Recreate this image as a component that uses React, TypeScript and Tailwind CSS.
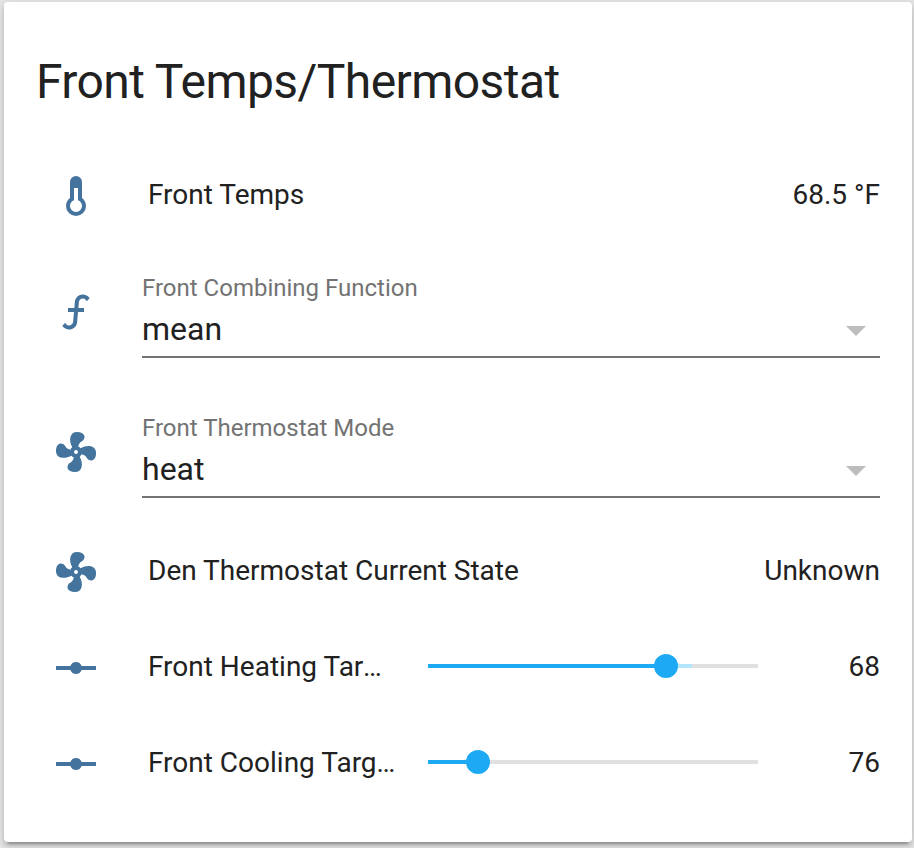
import type { ReactNode } from "react";

const ICONS = {
  thermometer:
    "M17,17A5,5 0 0,1 12,22A5,5 0 0,1 7,17C7,15.36 7.79,13.91 9,13V5A3,3 0 0,1 12,2A3,3 0 0,1 15,5V13C16.21,13.91 17,15.36 17,17M11,8V14.17C9.83,14.58 9,15.69 9,17A3,3 0 0,0 12,20A3,3 0 0,0 15,17C15,15.69 14.17,14.58 13,14.17V8H11Z",
  func: "M15.6,5.29C14.5,5.19 13.53,6 13.43,7.11L13.18,10H16V12H13L12.56,17.07C12.37,19.27 10.43,20.9 8.23,20.7C6.92,20.59 5.82,19.86 5.17,18.83L6.67,17.33C6.91,18.07 7.57,18.64 8.4,18.71C9.5,18.81 10.47,18 10.57,16.89L11,12H8V10H11.17L11.44,6.93C11.63,4.73 13.57,3.1 15.77,3.3C17.08,3.41 18.18,4.14 18.83,5.17L17.33,6.67C17.09,5.93 16.43,5.36 15.6,5.29Z",
  fan: "M12,11A1,1 0 0,0 11,12A1,1 0 0,0 12,13A1,1 0 0,0 13,12A1,1 0 0,0 12,11M12.5,2C17,2 17.11,5.57 14.75,6.75C13.76,7.24 13.32,8.29 13.13,9.22C13.61,9.42 14.03,9.73 14.35,10.13C18.05,8.13 22.03,8.92 22.03,12.5C22.03,17 18.46,17.1 17.28,14.73C16.78,13.74 15.72,13.3 14.79,13.11C14.59,13.59 14.28,14 13.88,14.34C15.87,18.03 15.08,22 11.5,22C7,22 6.91,18.42 9.27,17.24C10.25,16.75 10.69,15.71 10.89,14.79C10.4,14.59 9.97,14.27 9.65,13.87C5.96,15.85 2,15.07 2,11.5C2,7 5.56,6.89 6.74,9.26C7.24,10.25 8.29,10.68 9.22,10.87C9.41,10.39 9.73,9.97 10.14,9.65C8.15,5.96 8.94,2 12.5,2Z",
  vertex:
    "M2,11H9.17C9.58,9.83 10.69,9 12,9C13.31,9 14.42,9.83 14.83,11H22V13H14.83C14.42,14.17 13.31,15 12,15C10.69,15 9.58,14.17 9.17,13H2V11Z",
};

type IconName = keyof typeof ICONS;

function EntityIcon({ name }: { name: IconName }) {
  return (
    <div className="flex w-20 shrink-0 justify-center">
      <svg viewBox="0 0 24 24" className="size-12 fill-[#44739e]">
        <path d={ICONS[name]} />
      </svg>
    </div>
  );
}

function Row({ icon, children }: { icon: IconName; children: ReactNode }) {
  return (
    <div className="flex h-20 items-center">
      <EntityIcon name={icon} />
      <div className="ml-8 flex min-w-0 flex-1 items-center pb-[3px] text-[28px] leading-10">{children}</div>
    </div>
  );
}

function StateRow({ icon, name, state }: { icon: IconName; name: string; state: string }) {
  return (
    <Row icon={icon}>
      <span className="flex-1">{name}</span>
      <span>{state}</span>
    </Row>
  );
}

function SelectRow({ icon, label, value }: { icon: IconName; label: string; value: string }) {
  return (
    <div className="flex h-[120px] items-center">
      <EntityIcon name={icon} />
      <div className="ml-[26px] flex h-full flex-1 flex-col pt-[18px]">
        <div className="h-9 text-2xl leading-9 text-[#737373]">{label}</div>
        <div className="flex h-[52px] items-start justify-between border-b-2 border-[#737373] pr-[14px]">
          <span className="text-[32px] leading-[46px]">{value}</span>
          <svg viewBox="0 0 20 10" className="mt-5 h-[10px] w-5 fill-[#bdbdbd]">
            <path d="M0 0h20L10 10z" />
          </svg>
        </div>
      </div>
    </div>
  );
}

interface SliderRowProps {
  name: string;
  value: number;
  filled: number;
  secondary: number;
}

function SliderRow({ name, value, filled, secondary }: SliderRowProps) {
  return (
    <Row icon="vertex">
      <span className="w-[248px] truncate">{name}</span>
      <div className="relative ml-8 mt-[-1px] h-1 w-[330px] bg-[#e0e0e0]">
        <div className="absolute inset-y-0 left-0 bg-[#b3e5fc]" style={{ width: secondary }} />
        <div className="absolute inset-y-0 left-0 bg-[#1da9f3]" style={{ width: filled }} />
        <div className="absolute -top-2.5 -ml-3 size-6 rounded-full bg-[#1da9f3]" style={{ left: filled }} />
      </div>
      <span className="flex-1 text-right">{value}</span>
    </Row>
  );
}

export default function App() {
  return (
    <div className="h-[848px] overflow-hidden bg-[#e5e5e5] pt-0.5 pr-0.5 pl-1 font-[Roboto,sans-serif] text-[#212121]">
      <div className="h-[840px] rounded-[4px] bg-white px-8 shadow-[0_4px_4px_0_rgba(0,0,0,0.14),0_2px_10px_0_rgba(0,0,0,0.12),0_6px_2px_-4px_rgba(0,0,0,0.2)]">
        <h1 className="h-[154px] pt-12 text-5xl leading-[64px] tracking-[-0.012em]">Front Temps/Thermostat</h1>
        <StateRow icon="thermometer" name="Front Temps" state="68.5 °F" />
        <div className="mt-4 flex flex-col gap-5">
          <SelectRow icon="func" label="Front Combining Function" value="mean" />
          <SelectRow icon="fan" label="Front Thermostat Mode" value="heat" />
        </div>
        <div className="mt-5 flex flex-col gap-4">
          <StateRow icon="fan" name="Den Thermostat Current State" state="Unknown" />
          <SliderRow name="Front Heating Target" value={68} filled={238} secondary={264} />
          <SliderRow name="Front Cooling Target" value={76} filled={50} secondary={50} />
        </div>
      </div>
    </div>
  );
}
